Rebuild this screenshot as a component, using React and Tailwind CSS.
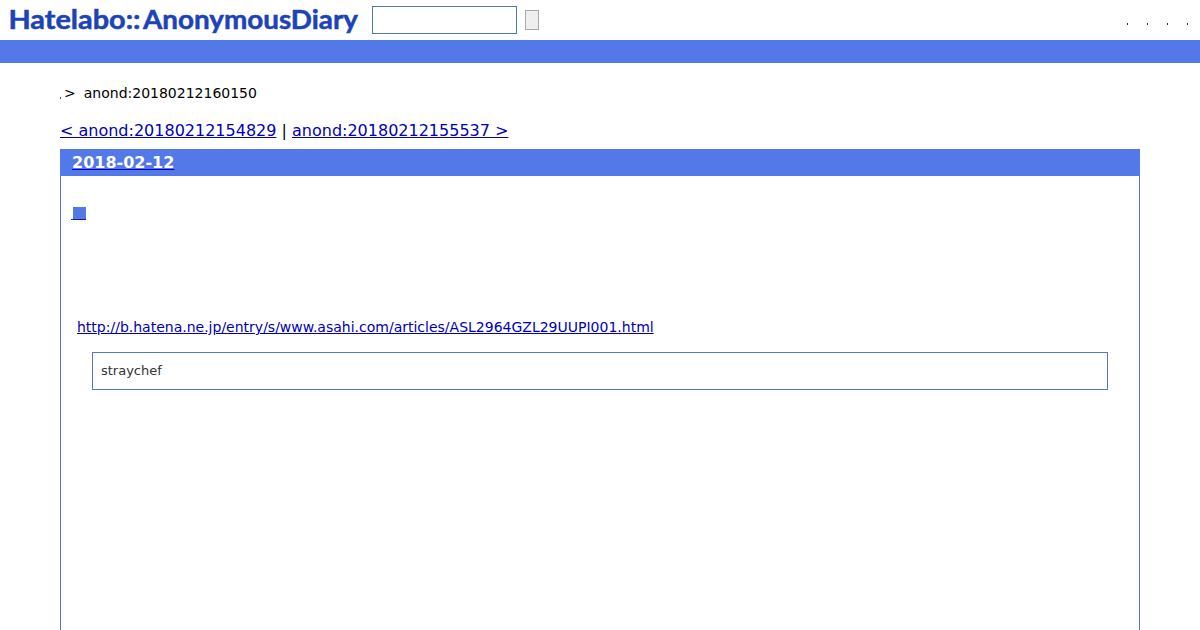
const font = 'font-["DejaVu_Sans",sans-serif]';

function Logo() {
  return (
    <svg width="350" height="40" viewBox="0 0 350 40" className="block shrink-0" aria-label="Hatelabo::AnonymousDiary">
      <g fill="#1c43b8" stroke="#1c43b8" strokeWidth="0.5" fontFamily="Lato, sans-serif" fontWeight="700" fontSize="26">
        <text x="-0.5" y="29" textLength="132" lengthAdjust="spacingAndGlyphs">Hatelabo::</text>
        <text x="134" y="29" textLength="215" lengthAdjust="spacingAndGlyphs">AnonymousDiary</text>
      </g>
    </svg>
  );
}

function Header() {
  return (
    <header>
      <div className="flex h-10 items-center pl-[9px]">
        <Logo />
        <input type="text" className="ml-[13px] h-7 w-[145px] border border-[#5279b0] bg-white px-1 text-sm" />
        <button type="button" className="ml-2 h-5 w-3.5 border border-[#a8a8a8] bg-[#efefef]" />
        <nav className="mt-2 mr-3 ml-auto flex gap-[19px]">
          {[0, 1, 2, 3].map((i) => (
            <span key={i} className="h-0.5 w-px bg-[#333333]" />
          ))}
        </nav>
      </div>
      <div className="h-[23px] bg-[#5279e7]" />
    </header>
  );
}

function Entry() {
  return (
    <article className="mt-2 h-[481px] border-x border-[#5279c7]">
      <h2 className="-mx-px h-[27px] bg-[#5279e7] pl-3 text-base leading-[27px] font-bold">
        <a href="#" className="text-white underline decoration-[#0000cc]">2018-02-12</a>
      </h2>
      <h3 className="flex pt-[31px] pl-2.5">
        <a href="#" className="flex h-[13px] w-[15px] justify-end border-b border-[#1a1a9a]">
          <span className="h-3 w-[13px] bg-[#5279e7]" />
        </a>
      </h3>
      <p className="mt-[97px] pl-4 text-sm leading-5">
        <a href="#" className="text-[#0000b8] underline">
          http://b.hatena.ne.jp/entry/s/www.asahi.com/articles/ASL2964GZL29UUPI001.html
        </a>
      </p>
      <blockquote className="mx-[31px] mt-[15px] h-[38px] border border-[#5279c7] px-2 text-[13px] leading-9 text-[#333333]">
        straychef
      </blockquote>
    </article>
  );
}

export default function App() {
  return (
    <div className={`h-[630px] overflow-hidden bg-white text-black ${font}`}>
      <Header />
      <main className="mx-[60px] pt-5">
        <div className="flex h-5 items-center text-sm leading-5">
          <span className="mt-[9px] h-0.5 w-px bg-[#555555]" />
          <span className="ml-[3px]">&gt;</span>
          <span className="ml-2">anond:20180212160150</span>
        </div>
        <div className="mt-[18px] h-5 text-base leading-5">
          <a href="#" className="text-[#0000b8] underline">&lt; anond:20180212154829</a>
          {' | '}
          <a href="#" className="text-[#0000b8] underline">anond:20180212155537 &gt;</a>
        </div>
        <Entry />
      </main>
    </div>
  );
}
